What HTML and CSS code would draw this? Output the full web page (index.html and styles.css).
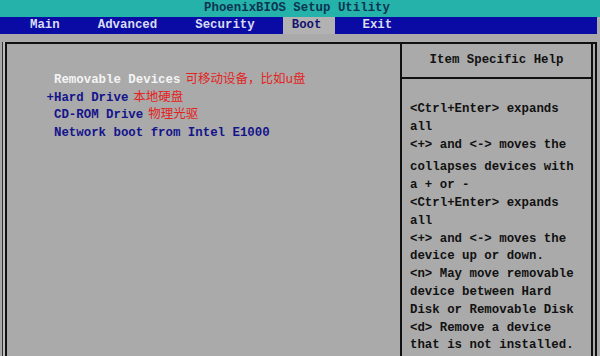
FILE: index.html
```html
<!DOCTYPE html>
<html lang="zh-CN">
<head>
    <meta charset="UTF-8">
    <meta name="viewport" content="width=device-width, initial-scale=1.0">
    <title>PhoenixBIOS Setup Utility</title>
    <link rel="stylesheet" href="styles.css">
</head>
<body>
    <div class="title">PhoenixBIOS Setup Utility</div>
    <div class="menu">
        <span class="tab">Main</span>
        <span class="tab">Advanced</span>
        <span class="tab">Security</span>
        <span class="tab active">Boot</span>
        <span class="tab">Exit</span>
    </div>
    <div class="main">
        <div class="frame">
            <div class="boot-list">
                <div class="item selected">Removable Devices<span class="cn">可移动设备，比如u盘</span></div>
                <div class="item"><span class="plus">+</span>Hard Drive<span class="cn">本地硬盘</span></div>
                <div class="item">CD-ROM Drive<span class="cn">物理光驱</span></div>
                <div class="item">Network boot from Intel E1000</div>
            </div>
            <div class="help">
                <div class="help-title">Item Specific Help</div>
                <div class="help-text">
                    <div>&lt;Ctrl+Enter&gt; expands</div>
                    <div>all</div>
                    <div>&lt;+&gt; and &lt;-&gt; moves the</div>
                    <div class="gap">collapses devices with</div>
                    <div>a + or -</div>
                    <div>&lt;Ctrl+Enter&gt; expands</div>
                    <div>all</div>
                    <div>&lt;+&gt; and &lt;-&gt; moves the</div>
                    <div>device up or down.</div>
                    <div>&lt;n&gt; May move removable</div>
                    <div>device between Hard</div>
                    <div>Disk or Removable Disk</div>
                    <div>&lt;d&gt; Remove a device</div>
                    <div>that is not installed.</div>
                </div>
            </div>
        </div>
    </div>
</body>
</html>
```

FILE: styles.css
```css
body {
    margin: 0;
    width: 600px;
    height: 356px;
    overflow: hidden;
    background: #aaaaaa;
    font-family: 'Liberation Mono', 'DejaVu Sans Mono', monospace;
    font-size: 12.4px;
    font-weight: bold;
}
.title {
    height: 17px;
    line-height: 17px;
    background: #25b2ab;
    color: #0c3552;
    text-align: center;
    padding-right: 6px;
}
.menu {
    height: 17px;
    line-height: 17px;
    background: #0a0aa4;
    margin-right: 3px;
    display: flex;
    gap: 18px;
    padding-left: 20px;
}
.tab {
    padding: 0 10px;
    color: #d8dcf4;
}
.tab.active {
    background: #b2b2b2;
    color: #141470;
    padding: 0 13px 0 9px;
}
.main {
    padding: 8px 3px 0 5px;
}
.frame {
    height: 340px;
    border: 2px solid #111;
    border-bottom: none;
    box-shadow: -2px 0 0 #bcbcbc, -3px 0 0 #333;
    display: grid;
    grid-template-columns: 393px 1fr;
}
.boot-list {
    padding: 28px 0 0 47px;
    line-height: 17.7px;
    color: #14148a;
}
.item {
    height: 17.7px;
    white-space: nowrap;
}
.item.selected {
    color: #f4f4f4;
}
.plus {
    margin-left: -7.45px;
}
.cn {
    font-family: 'Noto Sans CJK SC', sans-serif;
    font-weight: normal;
    font-size: 12.5px;
    line-height: 1;
    color: #e3231d;
    margin-left: 5px;
}
.help {
    border-left: 2px solid #111;
    border-right: 2px solid #111;
    margin-right: 2px;
    color: #111;
}
.help-title {
    height: 33px;
    line-height: 33px;
    text-align: center;
    border-bottom: 2px solid #111;
}
.help-text {
    padding: 22px 0 0 8px;
    line-height: 17.8px;
    white-space: nowrap;
}
.help-text .gap {
    margin-top: 5px;
}
```
